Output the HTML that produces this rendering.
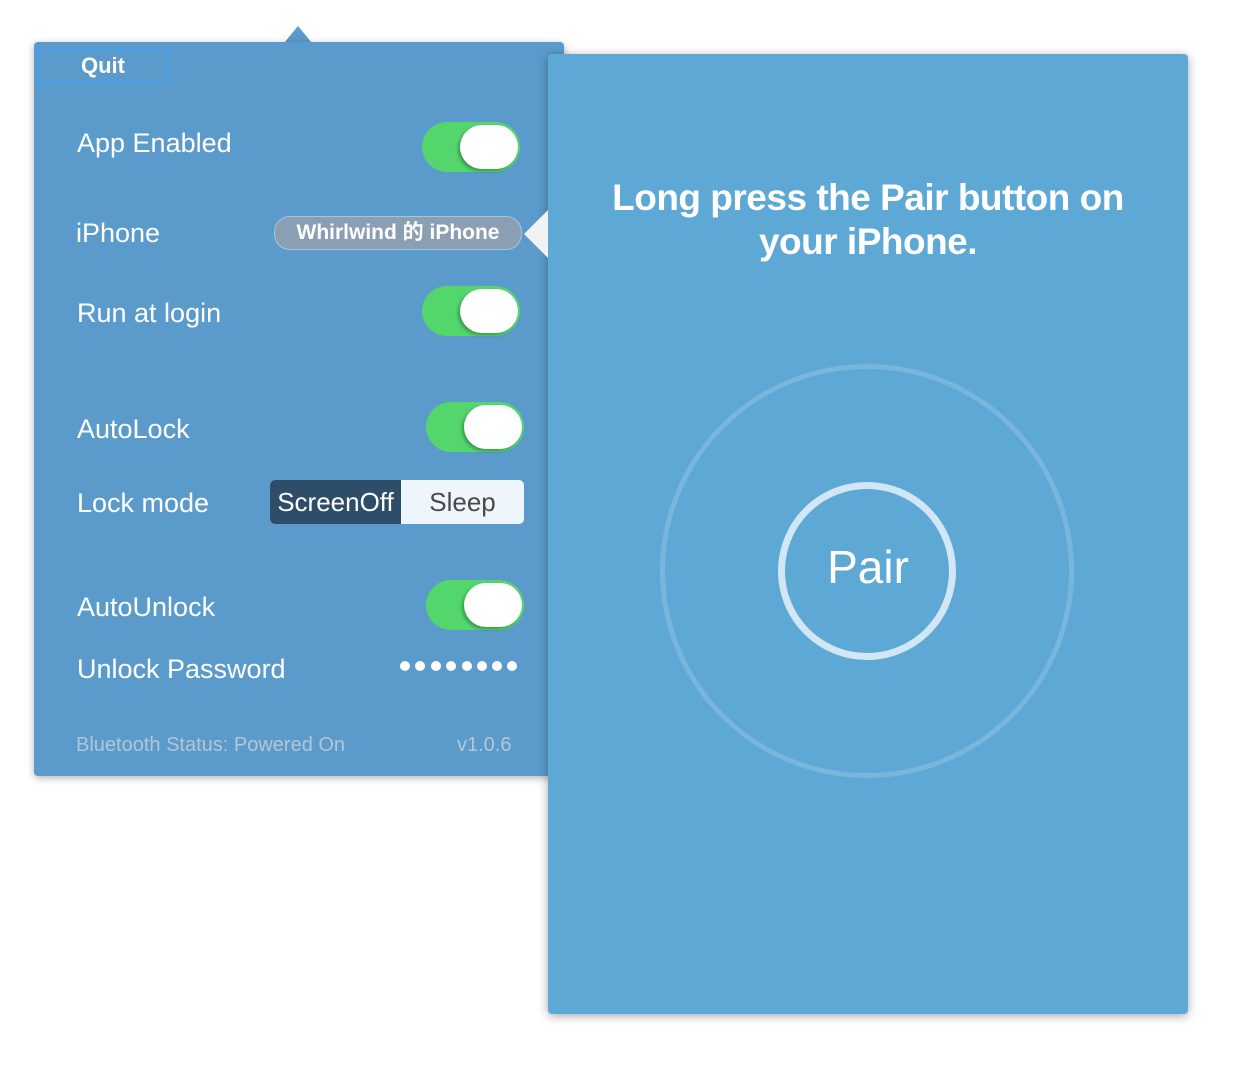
<!DOCTYPE html>
<html><head><style>
body{margin:0;width:1248px;height:1082px;background:#fff;position:relative;overflow:hidden;font-family:"Liberation Sans","Noto Sans CJK SC",sans-serif}
.l{position:absolute;left:34px;top:42px;width:530px;height:734px;background:#5a9bcb;border-radius:4px;box-shadow:0 2px 8px rgba(0,0,0,.3)}
.arr{position:absolute;left:284px;top:26px;width:0;height:0;border-left:14px solid transparent;border-right:14px solid transparent;border-bottom:17px solid #5a9bcb}
.r{position:absolute;left:548px;top:54px;width:640px;height:960px;background:#5ea8d5;border-radius:4px;box-shadow:0 2px 10px rgba(0,0,0,.35)}
.notch{position:absolute;left:524px;top:210px;width:0;height:0;border-top:24px solid transparent;border-bottom:24px solid transparent;border-right:24px solid #f2f2f2}
.t{position:absolute;color:#fff;font-size:27px;left:77px}
.sw{position:absolute;width:98px;height:50px;border-radius:25px;background:#53d76d}
.sw:after{content:"";position:absolute;right:2px;top:3px;width:58px;height:44px;border-radius:22px;background:#fff;box-shadow:-2px 2px 3px rgba(0,0,0,.3)}
.d{position:absolute;top:661px;width:10px;height:10px;border-radius:50%;background:#fff}
</style></head><body>
<div class="arr"></div>
<div class="l">
<div style="position:absolute;left:2px;top:6px;width:128px;height:30px;border:3px solid #4f9ce0;border-radius:2px;color:#fff;font-weight:bold;font-size:22px;text-align:center;line-height:30px">Quit</div>
</div>
<div class="t" style="top:128px">App Enabled</div>
<div class="sw" style="left:422px;top:122px"></div>
<div class="t" style="top:218px;left:76px">iPhone</div>
<div style="position:absolute;left:274px;top:216px;width:246px;height:32px;border-radius:16px;background:#8aa0b2;border:1px solid #a9c4da;color:#fff;font-weight:bold;font-size:21px;line-height:32px;text-align:center">Whirlwind 的 iPhone</div>
<div class="t" style="top:298px">Run at login</div>
<div class="sw" style="left:422px;top:286px"></div>
<div class="t" style="top:414px">AutoLock</div>
<div class="sw" style="left:426px;top:402px"></div>
<div class="t" style="top:488px">Lock mode</div>
<div style="position:absolute;left:270px;top:480px;width:254px;height:44px;border-radius:5px;overflow:hidden;background:#eef5fc;font-size:26px;line-height:44px">
<div style="position:absolute;left:0;top:0;width:131px;height:44px;background:#2e4d68;color:#fff;text-align:center">ScreenOff</div>
<div style="position:absolute;left:131px;width:123px;color:#4a4a4a;text-align:center">Sleep</div></div>
<div class="t" style="top:592px">AutoUnlock</div>
<div class="sw" style="left:426px;top:580px"></div>
<div class="t" style="top:654px">Unlock Password</div>
<div class="d" style="left:400px"></div><div class="d" style="left:415px"></div><div class="d" style="left:431px"></div><div class="d" style="left:446px"></div><div class="d" style="left:462px"></div><div class="d" style="left:477px"></div><div class="d" style="left:492px"></div><div class="d" style="left:507px"></div>
<div style="position:absolute;left:76px;top:734px;color:#b4c6d4;font-size:20px">Bluetooth Status: Powered On</div>
<div style="position:absolute;left:457px;top:734px;color:#b4c6d4;font-size:20px">v1.0.6</div>
<div class="r">
<div style="position:absolute;left:0;top:122px;width:640px;text-align:center;color:#fff;font-weight:bold;font-size:37px;line-height:44px;letter-spacing:-0.5px">Long press the Pair button on<br>your iPhone.</div>
<div style="position:absolute;left:112px;top:310px;width:404px;height:404px;border-radius:50%;border:5px solid #78b6dd"></div>
<div style="position:absolute;left:230px;top:428px;width:164px;height:164px;border-radius:50%;border:7px solid #d2e7f5"></div>
<div style="position:absolute;left:0;top:486px;width:640px;text-align:center;color:#fff;font-size:46px">Pair</div>
</div>
<div class="notch"></div>
</body></html>
